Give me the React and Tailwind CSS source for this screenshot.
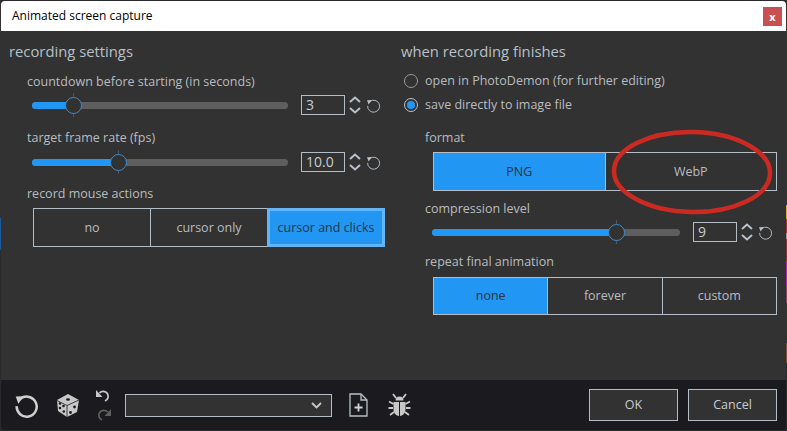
const FONT = "font-['Open_Sans','Noto_Sans',sans-serif]";

function ResetIcon({ className, color = "#b9c0c8", sw = 1.6 }) {
  return (
    <svg className={className} viewBox="0 0 24 24" fill="none">
      <path d="M6.200 5.600A9.600 9.600 0 1 1 2.600 12.600" stroke={color} strokeWidth={sw} />
      <path d="M1.600 3.400 9.400 3.200 4.200 10.200Z" fill={color} />
    </svg>
  );
}

function Spin({ value }) {
  return (
    <div className="flex items-center">
      <div className="w-[44px] h-[20px] border border-[#b4bcc6] flex items-center pl-1 text-[14px] leading-none text-[#c8ccd0]">{value}</div>
      <svg className="ml-[4px] w-[12px] h-[20px]" viewBox="0 0 12 20" fill="none" stroke="#b9c0c8" strokeWidth="2">
        <path d="M1 7l5-4.500 5 4.500M1 13l5 4.500 5-4.500" />
      </svg>
      <ResetIcon className="ml-[5px] w-[15px] h-[15px]" sw={1.500} />
    </div>
  );
}

function Slider({ width, fill, value }) {
  return (
    <div className="flex items-center justify-between">
      <div className="relative h-[20px] flex items-center" style={{ width }}>
        <div className="w-full h-[7px] rounded-full bg-[#5e5e5e]" />
        <div className="absolute left-0 h-[7px] rounded-l-full bg-[#2196f3]" style={{ width: fill }} />
        <div className="absolute top-[-2px] w-px h-[24px] bg-[#555]" style={{ left: fill }} />
        <div className="absolute w-[17px] h-[17px] rounded-full border border-[#2f8fdf] bg-[#323232]" style={{ left: fill - 8 }} />
      </div>
      <Spin value={value} />
    </div>
  );
}

function Segments({ items, active, focus, className }) {
  return (
    <div className={`flex border border-[#b4bcc6] ${className}`}>
      {items.map((item, i) => {
        const on = i === active;
        return (
          <div
            key={item}
            className={`relative flex-1 flex items-center justify-center pt-px text-[12.500px] ${i > 0 ? "border-l border-[#b4bcc6]" : ""} ${on ? "bg-[#2196f3] text-[#2b3440]" : "text-[#b8bcc0]"}`}
          >
            {item}
            {on && focus && <div className="absolute inset-[-1px] border-[3px] border-[#64b5f6]" />}
          </div>
        );
      })}
    </div>
  );
}

function Radio({ checked, label, className }) {
  return (
    <div className={`flex items-center gap-[7px] text-[12.500px] text-[#b8bcc0] ${className}`}>
      <div className={`w-[14px] h-[14px] rounded-full border flex items-center justify-center ${checked ? "border-[#b9c0c8]" : "border-[#9a9a9a]"}`}>
        {checked && <div className="w-[8px] h-[8px] rounded-full bg-[#2196f3]" />}
      </div>
      <span className="pt-px">{label}</span>
    </div>
  );
}

function Dice() {
  return (
    <svg className="w-[24px] h-[25px]" viewBox="0 0 24 25">
      <path d="M12 1 23 7 21 19 11 24 2 18 1 7Z" fill="#c8c8c8" />
      <path d="M1 7.500 11 12.500 11 24M23 7 11 12.500" stroke="#1b1b1f" strokeWidth="0.8" fill="none" />
      <g fill="#1b1b1f">
        <ellipse cx="12" cy="6.500" rx="2" ry="1.300" />
        <circle cx="4" cy="10.500" r="1.300" />
        <circle cx="7.500" cy="13" r="1.300" />
        <circle cx="4" cy="15" r="1.300" />
        <circle cx="7.800" cy="18.500" r="1.300" />
        <circle cx="14.500" cy="19.500" r="1.400" />
        <circle cx="18.500" cy="14" r="1.400" />
      </g>
    </svg>
  );
}

function Bug() {
  return (
    <svg className="w-[23px] h-[24px]" viewBox="0 0 23 24" fill="#c8c8c8">
      <path d="M7.500 7.500a4 4 0 0 1 8 0Z" />
      <path d="M5.500 9h5.500v14c-3-.3-5.500-3-5.500-7ZM12 9h5.500v7c0 4-2.500 6.700-5.500 7Z" />
      <g stroke="#c8c8c8" strokeWidth="1.800" fill="none">
        <path d="M8 5 5 1M15 5l3-4M5.500 11 1 8.500M17.500 11 22 8.500M5 15H.5M18 15h4.500M6 19l-4 3M17 19l4 3" />
      </g>
    </svg>
  );
}

function NewFile() {
  return (
    <svg className="w-[19px] h-[24px]" viewBox="0 0 19 24" fill="none" stroke="#b9c0c8" strokeWidth="1.300">
      <path d="M1 1h11l6 6v16H1Z" />
      <path d="M12 1v6h6" />
      <path d="M9.500 10.500v8M5.500 14.500h8" strokeWidth="1.800" stroke="#d0d4d8" />
    </svg>
  );
}

export default function App() {
  return (
    <div className={`w-[787px] h-[431px] overflow-hidden flex bg-[#2a2a2e] ${FONT}`}>
      <div className="w-px flex flex-col shrink-0">
        <div className="h-[218px] bg-[#333]" />
        <div className="h-[32px] bg-[#1c5a9c]" />
      </div>
      <div className="relative w-[785px] mt-px mb-px flex flex-col">
        <div className="h-[30px] bg-white rounded-t-[4px] flex items-center justify-between pl-[11px] pr-[4px] text-[12px] text-black">
          <span>Animated screen capture</span>
          <div className="w-[19px] h-[19px] bg-[#c85050] flex items-center justify-center text-white text-[11px] font-bold leading-none">x</div>
        </div>

        <div className="flex-1 bg-[#323232] flex">
          <div className="w-[392px] pl-[8px] pt-[8px]">
            <h2 className="text-[14.800px] leading-[24px] text-[#b8c0c8]">recording settings</h2>
            <div className="pl-[18px] mt-[10px] text-[12.500px] leading-[18px] text-[#b8bcc0]">countdown before starting (in seconds)</div>
            <div className="ml-[23px] mt-[4px] w-[349px]"><Slider width={256} fill={41} value="3" /></div>
            <div className="pl-[18px] mt-[14px] text-[12.500px] leading-[18px] text-[#b8bcc0]">target frame rate (fps)</div>
            <div className="ml-[23px] mt-[5px] w-[349px]"><Slider width={256} fill={86} value="10.0" /></div>
            <div className="pl-[18px] mt-[13px] text-[12.500px] leading-[18px] text-[#b8bcc0]">record mouse actions</div>
            <Segments className="ml-[24px] mt-[5px] w-[352px] h-[39px]" items={["no", "cursor only", "cursor and clicks"]} active={2} focus />
          </div>

          <div className="flex-1 pl-[8px] pt-[8px]">
            <h2 className="text-[14.800px] leading-[24px] text-[#b8c0c8]">when recording finishes</h2>
            <Radio className="ml-[3px] mt-[9px] h-[18px]" label="open in PhotoDemon (for further editing)" />
            <Radio className="ml-[3px] mt-[6px] h-[18px]" checked label="save directly to image file" />
            <div className="pl-[24px] mt-[15px] text-[12.500px] leading-[18px] text-[#b8bcc0]">format</div>
            <Segments className="ml-[32px] mt-[5px] w-[344px] h-[39px]" items={["PNG", "WebP"]} active={0} />
            <div className="pl-[24px] mt-[9px] text-[12.500px] leading-[18px] text-[#b8bcc0]">compression level</div>
            <div className="ml-[31px] mt-[4px] w-[341px]"><Slider width={248} fill={184} value="9" /></div>
            <div className="pl-[24px] mt-[11px] text-[12.500px] leading-[18px] text-[#b8bcc0]">repeat final animation</div>
            <Segments className="ml-[32px] mt-[6px] w-[344px] h-[38px]" items={["none", "forever", "custom"]} active={0} />
          </div>
        </div>

        <div className="h-[50px] bg-[#1b1b1f] rounded-b-[4px] flex items-center pl-[13px] pr-[9px]">
          <ResetIcon className="w-[25px] h-[25px]" color="#d0d0d0" sw={2.400} />
          <div className="ml-[17px]"><Dice /></div>
          <div className="ml-[16px] flex flex-col gap-[6px]">
            <svg className="w-[15px] h-[13px]" viewBox="0 0 15 13" fill="none">
              <path d="M3.500 4A5 5 0 1 1 9 12" stroke="#c8c8c8" strokeWidth="1.800" />
              <path d="M0 1v7h6.500Z" fill="#c8c8c8" />
            </svg>
            <svg className="w-[15px] h-[13px]" viewBox="0 0 15 13" fill="none">
              <path d="M11.500 4A5 5 0 1 0 6 12" stroke="#5e5e5e" strokeWidth="1.800" />
              <path d="M15 1v7H8.500Z" fill="#5e5e5e" />
            </svg>
          </div>
          <div className="ml-[14px] w-[207px] h-[23px] bg-[#323232] border border-[#b4bcc6] flex items-center justify-end pr-[9px]">
            <svg className="w-[11px] h-[7px]" viewBox="0 0 11 7" fill="none" stroke="#c8c8c8" strokeWidth="1.800">
              <path d="M1 1l4.500 4.500L10 1" />
            </svg>
          </div>
          <div className="ml-[17px]"><NewFile /></div>
          <div className="ml-[20px]"><Bug /></div>
          <div className="ml-auto flex gap-[10px]">
            <div className="w-[89px] h-[32px] bg-[#323232] border border-[#b4bcc6] flex items-center justify-center text-[12.500px] text-[#c8ccd0]">OK</div>
            <div className="w-[89px] h-[32px] bg-[#323232] border border-[#b4bcc6] flex items-center justify-center text-[12.500px] text-[#c8ccd0]">Cancel</div>
          </div>
        </div>

        {/* hand drawn annotation over the format buttons */}
        <svg className="absolute left-[608px] top-[126px] w-[166px] h-[90px]" viewBox="0 0 166 90" fill="none">
          <ellipse cx="83" cy="45" rx="78" ry="40" stroke="#cb2a22" strokeWidth="4.500" transform="rotate(1 83 45)" />
        </svg>
      </div>
      <div className="w-px flex flex-col shrink-0">
        <div className="h-[205px] bg-[#333]" />
        <div className="h-[14px] bg-[#c8b820]" />
        <div className="h-[14px] bg-[#a83228]" />
        <div className="h-[6px] bg-[#999]" />
        <div className="h-[22px] bg-[#8a3028]" />
        <div className="h-[24px] bg-[#c020c0]" />
        <div className="h-[18px] bg-[#904060]" />
        <div className="h-[40px] bg-[#333]" />
        <div className="h-[20px] bg-[#775030]" />
      </div>
    </div>
  );
}
